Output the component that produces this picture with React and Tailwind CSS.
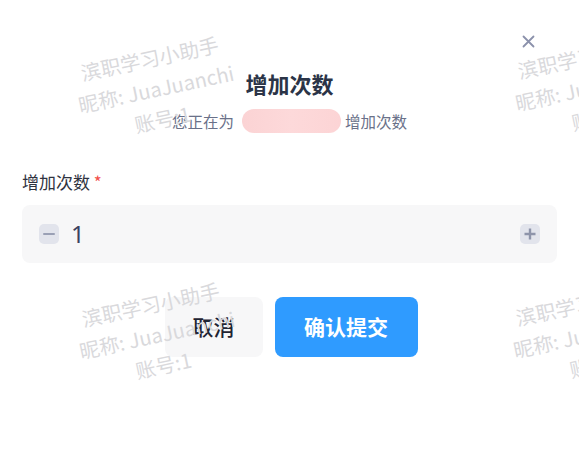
import React from "react";

const FONT = '"Noto Sans CJK SC", "Noto Sans", sans-serif';

const WM = ({ className }) => (
  <div
    className={`absolute origin-top-left -rotate-[12deg] flex flex-col items-center w-[154px] text-[20px] leading-[31px] text-[#d9d9dc] select-none whitespace-nowrap pointer-events-none ${className}`}
    style={{ fontFamily: FONT }}
  >
    <span>滨职学习小助手</span>
    <span>昵称: JuaJuanchi</span>
    <span>账号:1</span>
  </div>
);

export default function App() {
  return (
    <div className="relative w-[579px] h-[459px] bg-white overflow-hidden" style={{ fontFamily: FONT }}>
      <div className="flex flex-col px-[22px] pt-[35px]">
        <div className="flex justify-end pr-[22px] h-[12px]">
          <svg width="13" height="13" viewBox="0 0 13 13">
            <path d="M1.5 1.5L11.5 11.5M11.5 1.5L1.5 11.5" stroke="#8b91ab" strokeWidth="1.8" strokeLinecap="round" />
          </svg>
        </div>
        <div className="mt-[22px] text-center text-[22px] font-bold text-[#2b3447] leading-[28px]">增加次数</div>
        <div className="flex justify-center items-center mt-[12px] text-[15.5px] text-[#6a7189] leading-[24px]">
          <span>您正在为</span>
          <span className="ml-[8px] mr-[4px] w-[99px] h-[24px] rounded-full bg-gradient-to-r from-[#fbd3d4] via-[#fdd9da] to-[#fcd4d5]" />
          <span>增加次数</span>
        </div>
        <div className="mt-[37px] text-[17px] text-[#2f3340] leading-[24px]">
          增加次数 <span className="text-[#f2504b]">*</span>
        </div>
        <div className="mt-[11px] h-[58px] rounded-[8px] bg-[#f7f7f8] flex items-center pl-[17px] pr-[17px]">
          <div className="w-[20px] h-[20px] rounded-[5px] bg-[#e2e4ec] flex items-center justify-center">
            <div className="w-[12px] h-[2.5px] bg-[#9aa0b5] rounded" />
          </div>
          <span className="ml-[12px] text-[24px] leading-[30px] text-[#3b4260]" style={{ fontFamily: '"Noto Sans", sans-serif' }}>1</span>
          <div className="ml-auto w-[20px] h-[20px] rounded-[5px] bg-[#e2e4ec] flex items-center justify-center">
            <svg width="12" height="12" viewBox="0 0 12 12">
              <path d="M6 0.5V11.5M0.5 6H11.5" stroke="#8e94aa" strokeWidth="2.4" />
            </svg>
          </div>
        </div>
        <div className="mt-[34px] flex justify-center gap-[12px] pl-[3px]">
          <button className="w-[98px] h-[60px] rounded-[8px] bg-[#f7f7f8] text-[21px] font-medium text-[#1f2433]">取消</button>
          <button className="w-[143px] h-[60px] rounded-[8px] bg-[#2f9bff] text-[21px] font-bold text-white">确认提交</button>
        </div>
      </div>
      <WM className="left-[71px] top-[59px]" />
      <WM className="left-[508px] top-[57px]" />
      <WM className="left-[72px] top-[305px]" />
      <WM className="left-[506px] top-[304px]" />
    </div>
  );
}
